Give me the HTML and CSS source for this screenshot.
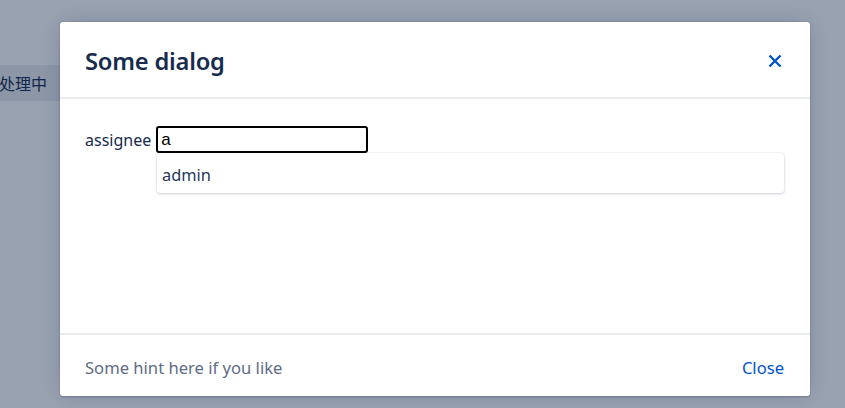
FILE: index.html
```html
<!DOCTYPE html>
<html>
<head>
<meta charset="utf-8">
<link rel="stylesheet" href="styles.css">
</head>
<body>
<div class="page">
  <div class="status-row"><span class="status">处理中</span></div>
</div>
<div class="overlay"></div>
<div class="modal">
  <div class="modal-header">
    <h1 class="modal-title">Some dialog</h1>
    <button class="close-x" aria-label="Close">
      <svg width="16" height="16" viewBox="0 0 16 16"><path d="M2.5 2.5 L13.5 13.5 M13.5 2.5 L2.5 13.5" stroke="#0052cc" stroke-width="2.4" stroke-linecap="butt"/></svg>
    </button>
  </div>
  <div class="modal-body">
    <div class="field">
      <label class="label">assignee</label>
      <div class="input-wrap">
        <div class="input">a</div>
      </div>
    </div>
    <div class="suggest">
      <div class="suggest-item">admin</div>
    </div>
  </div>
  <div class="modal-footer">
    <span class="hint">Some hint here if you like</span>
    <a class="close-link">Close</a>
  </div>
</div>
</body>
</html>
```
FILE: styles.css
```css
html, body {
  margin: 0;
  padding: 0;
  width: 845px;
  height: 408px;
  overflow: hidden;
  font-family: "Noto Sans", "Noto Sans CJK SC", sans-serif;
}
.page {
  width: 845px;
  height: 408px;
  background: #ffffff;
  padding-top: 65px;
  box-sizing: border-box;
}
.status-row {
  height: 36px;
  width: 120px;
  background: #ebecf0;
  display: flex;
  align-items: center;
}
.status {
  font-family: "Noto Sans CJK SC", sans-serif;
  font-size: 16px;
  color: #172b4d;
  margin-left: -1px;
}
.overlay {
  position: absolute;
  inset: 0;
  background: rgba(9, 30, 66, 0.42);
}
.modal {
  position: absolute;
  left: 60px;
  top: 22px;
  width: 750px;
  height: 374px;
  background: #fff;
  border-radius: 3px;
  box-shadow: 0 0 0 1px rgba(9,30,66,0.08), 0 2px 1px rgba(9,30,66,0.08), 0 0 20px -6px rgba(9,30,66,0.31);
  display: flex;
  flex-direction: column;
}
.modal-header {
  height: 75px;
  border-bottom: 2px solid #ebecf0;
  display: flex;
  align-items: center;
  justify-content: space-between;
  padding: 0 27px 0 25px;
}
.modal-title {
  margin: 0;
  font-size: 23.7px;
  font-weight: 600;
  color: #172b4d;
  letter-spacing: -0.2px;
  padding-top: 3px;
}
.close-x {
  border: 0;
  background: none;
  padding: 0;
  width: 16px;
  height: 16px;
  display: flex;
  margin-top: 2px;
}
.modal-body {
  flex: 1;
  padding: 27px 26px 0 25px;
  position: relative;
}
.field {
  display: flex;
  align-items: center;
  gap: 5px;
}
.label {
  font-size: 16px;
  color: #172b4d;
}
.input {
  height: 23px;
  border: 2px solid #000;
  border-radius: 3px;
  font-family: "Liberation Sans", sans-serif;
  font-size: 17px;
  line-height: 23px;
  padding-left: 3px;
  box-sizing: content-box;
  width: 205px;
  color: #000;
}
.suggest {
  margin-left: 72px;
  height: 40px;
  background: #fff;
  border-radius: 3px;
  box-shadow: 0 1px 3px rgba(9,30,66,0.2), 0 0 1px rgba(9,30,66,0.2);
  display: flex;
  align-items: center;
}
.suggest-item {
  font-size: 16.4px;
  color: #253858;
  padding-left: 5px;
  padding-top: 2px;
}
.modal-footer {
  height: 63px;
  border-top: 2px solid #ebecf0;
  display: flex;
  align-items: center;
  justify-content: space-between;
  padding: 3px 26px 0 25px;
  box-sizing: border-box;
}
.hint {
  font-size: 16.6px;
  color: #5e6c84;
}
.close-link {
  font-size: 16.6px;
  color: #0052cc;
}
```
